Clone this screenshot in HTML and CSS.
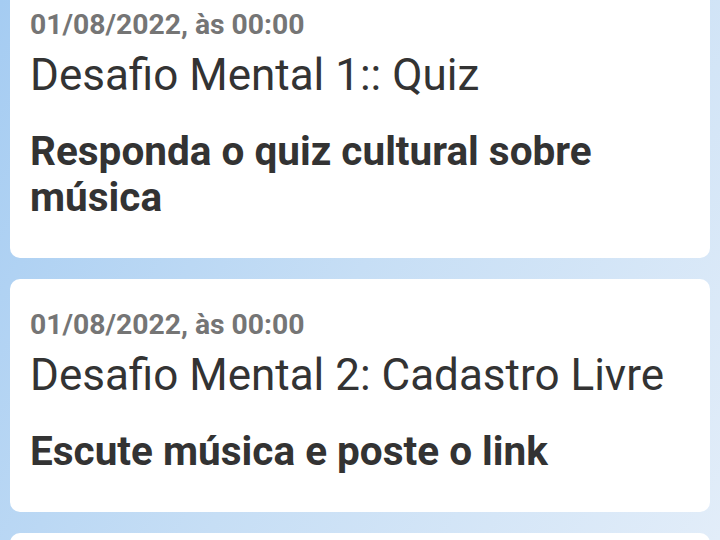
FILE: index.html
```
<!DOCTYPE html>
<html lang="pt-BR">
<head>
  <meta charset="UTF-8" />
  <meta name="viewport" content="width=device-width, initial-scale=1.0"/>
  <title>Desafios</title>
  <link rel="stylesheet" href="styles.css">
</head>
<body>
  <div class="feed">
    <div class="card">
      <div class="date">01/08/2022, às 00:00</div>
      <div class="title">Desafio Mental 1:: Quiz</div>
      <div class="desc">Responda o quiz cultural sobre música</div>
    </div>

    <div class="card">
      <div class="date">01/08/2022, às 00:00</div>
      <div class="title">Desafio Mental 2: Cadastro Livre</div>
      <div class="desc">Escute música e poste o link</div>
    </div>

    <div class="card card-empty"></div>
  </div>
</body>
</html>
```

FILE: styles.css
```
html, body {
  height: 100%;
}

body {
  margin: 0;
  padding: 0 10px;
  overflow: hidden;
  font-family: Roboto, "Liberation Sans", sans-serif;
  background: linear-gradient(120deg, #a5ccf2 0%, #c6def5 50%, #e2edf9 100%);
  color: #333;
}

.feed {
  margin-top: -21px;
  display: flex;
  flex-direction: column;
  gap: 21px;
}

.card {
  background: white;
  border-radius: 10px;
  padding: 30px 20px 38px;
}

.card-empty {
  min-height: 160px;
}

.date {
  font-size: 28.3px;
  font-weight: bold;
  color: #757575;
  line-height: 32px;
}

.title {
  font-size: 44px;
  line-height: 52px;
  margin-top: 8px;
}

.desc {
  font-size: 40.5px;
  font-weight: bold;
  line-height: 46px;
  margin-top: 27px;
}
```
